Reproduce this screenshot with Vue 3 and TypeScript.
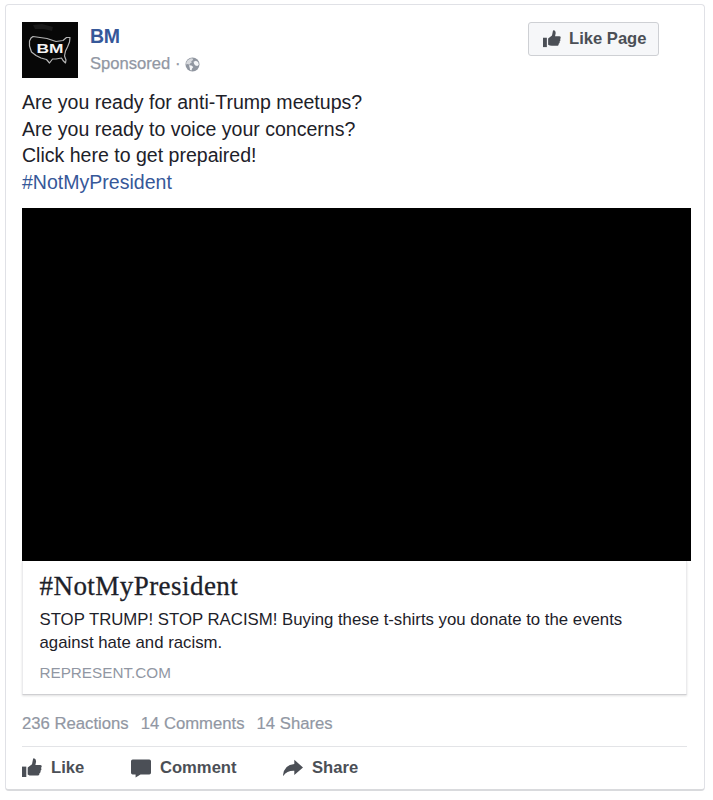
<script setup lang="ts">
interface Stat {
  count: number
  label: string
}

const lines: string[] = [
  'Are you ready for anti-Trump meetups?',
  'Are you ready to voice your concerns?',
  'Click here to get prepaired!',
]

const stats: Stat[] = [
  { count: 236, label: 'Reactions' },
  { count: 14, label: 'Comments' },
  { count: 14, label: 'Shares' },
]
</script>

<template>
  <article class="card">
    <header class="head">
      <svg class="avatar" viewBox="0 0 56 56">
        <rect width="56" height="56" fill="#070707" />
        <path d="M11 3l9-1 11 3-1 4-8-2-9 0z" fill="#191919" />
        <path
          d="M9 16L11 14.500 25 16.500 34 19.500 41 18.500 44.500 15.500 48 15.500 47.500 20 45.500 25 43.500 29 42.500 34 44 38 43.500 41 41 38.500 39.500 36 34 37 30.500 37 27.500 41 24.500 37.500 19 36 14 33.500 9.500 30 7.500 24 7.500 19z"
          fill="none" stroke="#b4b4b4" stroke-width="1.2" stroke-linejoin="round"
        />
        <text class="avatar-text" x="14.5" y="31" textLength="27" lengthAdjust="spacingAndGlyphs">BM</text>
      </svg>
      <div class="who">
        <a class="name">BM</a>
        <div class="meta">
          <span>Sponsored</span><span class="dot">·</span>
          <svg class="globe" viewBox="0 0 15 15">
            <circle cx="7.5" cy="7.5" r="7" fill="#9096a0" />
            <path d="M2.6 3.2L6 1.2l2.2.6-.5 1.5-1.5 1 .6 1.2-1.7 1-.6 1.3-1.8-.8-1.6.6.2-2.2z" fill="#d8dade" />
            <path d="M8.6 4.8l2.3-1 2.2 1.3.7 2.6-1.5 1.4-1.9-.5-1.3-1.5z" fill="#f4f5f7" />
            <path d="M4 8.3l2.4.3 1.900 1.500-1.200 1.400-.6 2-1.400-.6-.4-2.200z" fill="#f4f5f7" />
          </svg>
        </div>
      </div>
      <button class="like-page">
        <svg class="thumb" viewBox="0 0 20 20">
          <path d="M0 8.6h4.3V19H0z" />
          <path d="M5.7 9.4L10 6.2 11 1.2q.2-1.2 1.4-.8 1.7.6 1.7 3L13.4 7H18q1.8 0 1.7 1.5 0 1-.8 1.4.9.9.3 2-.3.7-.8.8.5 1-.1 1.8-.4.6-.9.7.2 1.2-.5 1.9-.6.5-1.6.5H9.8Q7.400 17.600 5.700 16.400z" />
        </svg>
        <span>Like Page</span>
      </button>
    </header>

    <div class="message">
      <p v-for="line in lines" :key="line">{{ line }}</p>
      <p><a class="tag">#NotMyPresident</a></p>
    </div>

    <div class="picture"></div>
    <section class="attachment">
      <h2>#NotMyPresident</h2>
      <p class="desc">STOP TRUMP! STOP RACISM! Buying these t-shirts you donate to the events<br>against hate and racism.</p>
      <p class="domain">REPRESENT.COM</p>
    </section>

    <div class="stats">
      <span v-for="s in stats" :key="s.label">{{ s.count }} {{ s.label }}</span>
    </div>

    <footer class="actions">
      <div class="action like">
        <svg class="icon" viewBox="0 0 20 20">
          <path d="M0 8.6h4.3V19H0z" />
          <path d="M5.7 9.4L10 6.2 11 1.2q.2-1.2 1.4-.8 1.7.6 1.7 3L13.4 7H18q1.8 0 1.7 1.5 0 1-.8 1.400.9.9.3 2-.3.7-.8.8.5 1-.1 1.8-.4.6-.9.7.2 1.2-.5 1.9-.6.5-1.6.5H9.800Q7.400 17.600 5.700 16.400z" />
        </svg>
        <span>Like</span>
      </div>
      <div class="action comment">
        <svg class="icon" viewBox="0 0 20 20">
          <path d="M1.700 1.500H18.300Q20 1.500 20 3.200V14.800Q20 16.500 18.300 16.500H9.500L4.600 19.600V16.500H1.700Q0 16.500 0 14.800V3.200Q0 1.500 1.700 1.500z" />
        </svg>
        <span>Comment</span>
      </div>
      <div class="action share">
        <svg class="icon" viewBox="0 0 20 20">
          <path d="M11.300 1.800L20 9.400 11.300 17V12.800Q4 12.500.4 17.800 0 17.900 0 17.200 1.300 6.700 11.300 6z" />
        </svg>
        <span>Share</span>
      </div>
    </footer>
  </article>
</template>

<style>
body {
  background: #fff;
}
</style>

<style scoped>
.card {
  box-sizing: border-box;
  width: 700px;
  height: 787px;
  margin: 4px 0 0 5px;
  padding: 17px 17px 0 16px;
  border: 1px solid #e0e1e6;
  border-bottom: 2px solid #d9dadd;
  border-radius: 4px;
  background: #fff;
  color: #1d2129;
  font-family: "Liberation Sans", Arial, sans-serif;
}
p,
h2 {
  margin: 0;
}
.head {
  display: flex;
  align-items: flex-start;
  height: 56px;
}
.avatar {
  width: 56px;
  height: 56px;
  flex: none;
}
.avatar-text {
  font: bold 13px "Liberation Sans", Arial, sans-serif;
  fill: #f4f4f4;
}
.who {
  padding-left: 12px;
}
.name {
  display: block;
  height: 28px;
  font-size: 19.500px;
  font-weight: bold;
  line-height: 28px;
  letter-spacing: -0.4px;
  color: #365899;
}
.meta {
  display: flex;
  align-items: center;
  height: 28px;
  font-size: 16.600px;
  color: #9197a3;
  -webkit-text-stroke: 0.25px #9197a3;
}
.dot {
  width: 15px;
  text-align: center;
}
.globe {
  width: 15px;
  height: 15px;
}
.like-page {
  box-sizing: border-box;
  display: flex;
  align-items: center;
  width: 131px;
  height: 34px;
  margin: 0 28px 0 auto;
  padding: 0 0 0 14px;
  border: 1px solid #ced0d4;
  border-radius: 3px;
  background: #f6f7f9;
  color: #4b4f56;
  font: bold 16.600px "Liberation Sans", Arial, sans-serif;
}
.thumb {
  width: 18px;
  height: 18px;
  margin-right: 8px;
  fill: #4b4f56;
}
.message {
  padding-top: 11px;
  font-size: 19.550px;
  line-height: 26.500px;
  white-space: nowrap;
}
.tag {
  color: #365899;
}
.picture {
  width: 669px;
  height: 353px;
  margin-top: 13px;
  background: #000;
}
.attachment {
  box-sizing: border-box;
  width: 665px;
  height: 134px;
  padding: 8px 0 0 16.500px;
  border: 1px solid #ebebed;
  border-top: 0;
  border-bottom-color: #cfcfd2;
  box-shadow: 0 1px 2px rgba(0, 0, 0, 0.12);
}
h2 {
  height: 39px;
  font: 27px/34px "Liberation Serif", "Times New Roman", serif;
  letter-spacing: 0.45px;
  -webkit-text-stroke: 0.3px #1d2129;
}
.desc {
  font-size: 16.780px;
  line-height: 23px;
  white-space: nowrap;
}
.domain {
  margin-top: 10px;
  font-size: 15.250px;
  line-height: 18px;
  color: #9197a3;
}
.stats {
  display: flex;
  gap: 12px;
  padding-top: 17px;
  height: 34px;
  font-size: 16.700px;
  line-height: 24px;
  color: #9197a3;
  -webkit-text-stroke: 0.2px #9197a3;
}
.actions {
  display: flex;
  align-items: center;
  width: 665px;
  height: 42px;
  border-top: 1px solid #e3e4e7;
  color: #4b4f56;
  font-size: 16.600px;
  font-weight: bold;
}
.action {
  display: flex;
  align-items: center;
}
.like {
  width: 109px;
}
.comment {
  width: 152px;
}
.icon {
  width: 20px;
  height: 20px;
  margin-right: 9px;
  fill: #4b4f56;
}
</style>
